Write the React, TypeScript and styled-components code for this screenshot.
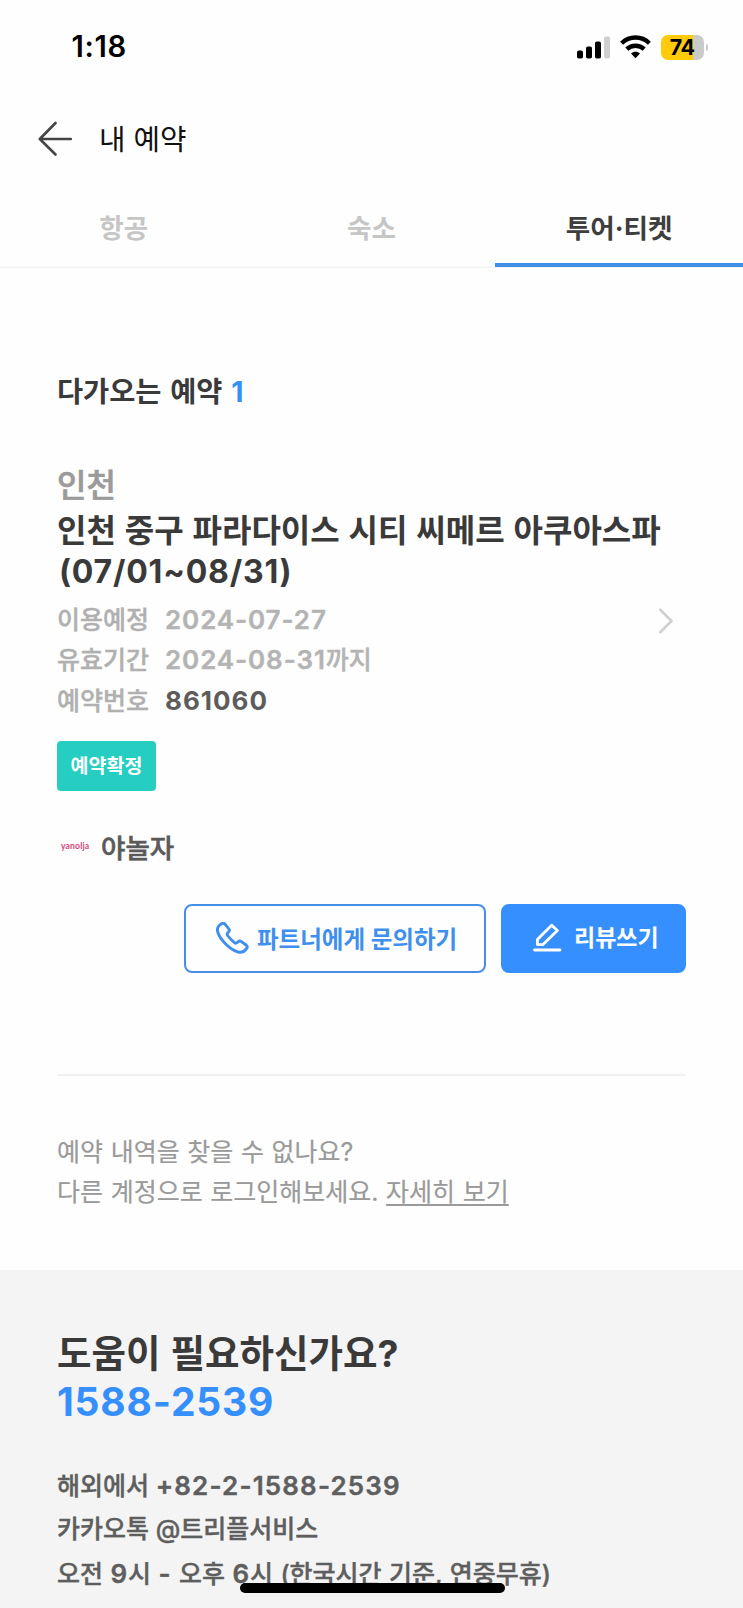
import React from "react";
import styled, { createGlobalStyle } from "styled-components";

const GlobalStyle = createGlobalStyle`
  * { box-sizing: border-box; }
  body {
    margin: 0;
    background: #fff;
    font-family: Inter, "Noto Sans CJK KR", sans-serif;
    color: #3a3a3a;
  }
  button { font: inherit; cursor: pointer; }
`;

const Screen = styled.div`
  position: relative;
  width: 743px;
  height: 1608px;
  overflow: hidden;
  display: flex;
  flex-direction: column;
  background: #fefefe;
  white-space: nowrap;
`;

const StatusBar = styled.div`
  height: 94px;
  flex: none;
  display: flex;
  align-items: center;
  justify-content: space-between;
  padding: 0 35px 0 71.5px;
`;

const Clock = styled.span`
  font-size: 29.2px;
  font-weight: 600;
  color: #000;
  line-height: 40px;
  letter-spacing: 0.7px;
`;

const StatusIcons = styled.div`
  display: flex;
  align-items: center;
`;

const Signal = styled.svg`
  margin-right: 10px;
`;

const Wifi = styled.svg`
  margin-right: 10px;
`;

const Battery = styled.div`
  width: 43.5px;
  height: 25px;
  border-radius: 7px;
  background: linear-gradient(90deg, #fdcb0a 0 32px, #cbcbcb 32px);
  color: #000;
  font-size: 21.5px;
  font-weight: 700;
  line-height: 25px;
  text-align: center;
  letter-spacing: -0.3px;
`;

const BatteryCap = styled.div`
  width: 2.5px;
  height: 7px;
  margin-left: 1.5px;
  border-radius: 0 3px 3px 0;
  background: #cbcbcb;
`;

const Header = styled.header`
  height: 90px;
  flex: none;
  display: flex;
  align-items: center;
  padding-left: 38px;
`;

const PageTitle = styled.h1`
  margin: 1px 0 0 25px;
  font-size: 28.8px;
  font-weight: 400;
  line-height: 40px;
  color: #111;
`;

const Tabs = styled.nav`
  flex: none;
  height: 84px;
  display: grid;
  grid-template-columns: repeat(3, 1fr);
  box-shadow: inset 0 -1.5px #f3f3f3;
`;

const Tab = styled.a<{ $active?: boolean }>`
  height: 83px;
  padding-top: 24px;
  text-align: center;
  font-size: 26.6px;
  font-weight: 700;
  line-height: 40px;
  color: ${(p) => (p.$active ? "#3d3d3d" : "#c6c6c6")};
  border-bottom: 4px solid ${(p) => (p.$active ? "#408ee8" : "transparent")};
`;

const Content = styled.main`
  flex: none;
  height: 1002px;
  padding: 103px 57px 0;
`;

const SectionTitle = styled.h2`
  margin: 0;
  font-size: 28.4px;
  font-weight: 700;
  line-height: 41px;
  word-spacing: 2px;
`;

const Count = styled.span`
  color: #368fff;
`;

const City = styled.div`
  margin-top: 53px;
  font-size: 32px;
  font-weight: 500;
  line-height: 42px;
  color: #9b9b9b;
  -webkit-text-stroke: 0.7px currentColor;
`;

const ProductName = styled.h3`
  margin: 3px 0 0;
  font-size: 32px;
  font-weight: 700;
  line-height: 41px;
  word-spacing: 1.3px;
`;

const Period = styled.span`
  padding-left: 2px;
  letter-spacing: 0.8px;
`;

const Details = styled.div`
  display: flex;
  justify-content: space-between;
  margin-top: 8px;
  padding-right: 12px;
`;

const DetailGrid = styled.dl`
  margin: 0;
  display: grid;
  grid-template-columns: 108px auto;
  grid-template-rows: 40px 41px 40px;
  font-size: 25px;
  font-weight: 500;
  line-height: 40px;
  color: #b0b0b0;
`;

const Label = styled.dt`
  -webkit-text-stroke: 0.4px currentColor;
`;

const Value = styled.dd<{ $strong?: boolean }>`
  margin: 0;
  color: ${(p) => (p.$strong ? "#5c5c5c" : "#b4b4b4")};
  font-weight: ${(p) => (p.$strong ? 700 : 500)};
  -webkit-text-stroke: ${(p) => (p.$strong ? 0 : 0.4)}px currentColor;
`;

const Digits = styled.span<{ $weight?: number; $spacing?: number }>`
  font-size: 26px;
  font-weight: ${(p) => p.$weight ?? 600};
  letter-spacing: ${(p) => p.$spacing ?? 0.9}px;
`;

const Chevron = styled.svg`
  margin-top: 7px;
`;

const StatusBadge = styled.div`
  width: 99px;
  height: 50px;
  margin-top: 20px;
  border-radius: 4px;
  background: #26cec2;
  color: #fff;
  font-size: 19.5px;
  font-weight: 700;
  line-height: 50px;
  text-align: center;
`;

const Partner = styled.div`
  height: 40px;
  margin-top: 37px;
  display: flex;
  align-items: center;
  font-size: 26.5px;
  font-weight: 500;
  line-height: 40px;
  color: #5a5a5a;
  -webkit-text-stroke: 0.6px currentColor;
`;

const PartnerLogo = styled.span`
  width: 44px;
  padding: 0 0 4px 4px;
  font-family: Lato, sans-serif;
  font-size: 8.6px;
  font-weight: 700;
  line-height: 12px;
  letter-spacing: 0.15px;
  color: #d8487c;
  -webkit-text-stroke: 0;
`;

const Actions = styled.div`
  display: flex;
  justify-content: flex-end;
  gap: 15px;
  margin-top: 36px;
`;

const ActionButton = styled.button<{ $primary?: boolean }>`
  height: 69px;
  width: ${(p) => (p.$primary ? 185 : 302)}px;
  padding: 0 0 0 30px;
  display: flex;
  align-items: center;
  border: 2px solid ${(p) => (p.$primary ? "#368fff" : "#468fe4")};
  border-radius: 8px;
  background: ${(p) => (p.$primary ? "#368fff" : "#fefefe")};
  color: ${(p) => (p.$primary ? "#fff" : "#3f8fee")};
  font-size: ${(p) => (p.$primary ? 23 : 23.5)}px;
  font-weight: 700;
  line-height: 40px;

  svg {
    flex: none;
    margin-right: ${(p) => (p.$primary ? 12 : 8)}px;
  }
  span {
    padding-top: ${(p) => (p.$primary ? 0 : 3)}px;
    padding-bottom: ${(p) => (p.$primary ? 1.5 : 0)}px;
  }
`;

const Divider = styled.hr`
  height: 2px;
  margin: 101px 0 0;
  border: 0;
  background: #f1f1f1;
`;

const MissingNote = styled.p`
  margin: 56px 0 0;
  font-size: 25px;
  line-height: 40.4px;
  word-spacing: 0.6px;
  color: #9a9a9a;
  -webkit-text-stroke: 0.2px currentColor;
`;

const MoreLink = styled.a`
  text-decoration: underline;
  text-decoration-thickness: 1.5px;
  text-underline-offset: 3px;
  text-decoration-skip-ink: none;
`;

const Support = styled.footer`
  flex: 1;
  padding: 60px 57px 0;
  background: #f4f4f4;
`;

const SupportTitle = styled.h2`
  margin: 0;
  font-size: 37.5px;
  font-weight: 700;
  line-height: 48px;
  word-spacing: 1px;
`;

const SupportPhone = styled.a`
  display: block;
  font-size: 39px;
  font-weight: 700;
  line-height: 48px;
  letter-spacing: 0.8px;
  color: #368fff;
`;

const SupportInfo = styled.div`
  margin-top: 37.5px;
  font-size: 25px;
  font-weight: 500;
  line-height: 43.6px;
  color: #5e5e5e;
  -webkit-text-stroke: 0.4px currentColor;
`;

const Hours = styled.div`
  word-spacing: 0.8px;
`;

const HomeIndicator = styled.div`
  position: absolute;
  left: 239.5px;
  bottom: 15px;
  width: 265px;
  height: 10px;
  border-radius: 5px;
  background: #000;
`;

export default function App() {
  return (
    <Screen>
      <GlobalStyle />
      <StatusBar>
        <Clock>1:18</Clock>
        <StatusIcons>
          <Signal width="33" height="23" viewBox="0 0 33 23">
            <rect x="0" y="14.5" width="6" height="8" rx="1.8" />
            <rect x="9" y="10.5" width="6" height="12" rx="1.8" />
            <rect x="18" y="5.5" width="6" height="17" rx="1.8" />
            <rect x="27" y="0.5" width="6" height="22" rx="1.8" fill="#cfcfcf" />
          </Signal>
          <Wifi width="31" height="24" viewBox="0 0 31 24">
            <g fill="none" stroke="#000" strokeWidth="4.3">
              <path d="M1.6 8.2C9.5 0.6 21.5 0.6 29.4 8.2" />
              <path d="M6.8 14.1C11.6 9.6 19.4 9.6 24.2 14.1" />
            </g>
            <path d="M11 18.4C13.6 16.1 17.4 16.1 20 18.4L15.5 23.2Z" />
          </Wifi>
          <Battery>74</Battery>
          <BatteryCap />
        </StatusIcons>
      </StatusBar>

      <Header>
        <svg width="36" height="36" viewBox="0 0 36 36" fill="none" stroke="#444" strokeWidth="2.6" strokeLinecap="round" strokeLinejoin="round">
          <path d="M17.5 2L1.8 18L17.5 33.5M1.8 18H32.8" />
        </svg>
        <PageTitle>내 예약</PageTitle>
      </Header>

      <Tabs>
        <Tab>항공</Tab>
        <Tab>숙소</Tab>
        <Tab $active>투어·티켓</Tab>
      </Tabs>

      <Content>
        <SectionTitle>
          다가오는 예약 <Count>1</Count>
        </SectionTitle>

        <City>인천</City>
        <ProductName>
          인천 중구 파라다이스 시티 씨메르 아쿠아스파
          <br />
          <Period>(07/01~08/31)</Period>
        </ProductName>

        <Details>
          <DetailGrid>
            <Label>이용예정</Label>
            <Value>
              <Digits>2024-07-27</Digits>
            </Value>
            <Label>유효기간</Label>
            <Value>
              <Digits>2024-08-31</Digits>까지
            </Value>
            <Label>예약번호</Label>
            <Value $strong>
              <Digits $weight={700} $spacing={1}>861060</Digits>
            </Value>
          </DetailGrid>
          <Chevron width="16" height="28" viewBox="0 0 16 28" fill="none" stroke="#d0d0d0" strokeWidth="2.6">
            <path d="M1.5 2L13.5 14L1.5 26" />
          </Chevron>
        </Details>

        <StatusBadge>예약확정</StatusBadge>

        <Partner>
          <PartnerLogo>yanolja</PartnerLogo>
          야놀자
        </Partner>

        <Actions>
          <ActionButton>
            <svg width="33" height="33" viewBox="0 0 33 33" fill="none" stroke="currentColor" strokeWidth="2.9" strokeLinejoin="round">
              <path d="M5.8 1.6C7 0.9 8.3 1.3 9.2 2.4L12.8 6.8C13.6 7.9 13.4 9.2 12.4 10.2L11.6 11.2C11 12 11 12.7 11.6 13.5C13.7 16.4 16 18.7 18.7 20.8C19.5 21.4 20.2 21.3 21 20.7L22 19.8C23 19 24.3 18.9 25.4 19.7L30 23C31.3 24 31.5 25.3 30.7 26.4C28.5 29.6 25.2 31 21.6 29.8C13.6 27.2 4.4 18 1.8 10.2C0.8 7 2.4 3.6 5.8 1.6Z" />
            </svg>
            <span>파트너에게 문의하기</span>
          </ActionButton>
          <ActionButton $primary>
            <svg width="29" height="31" viewBox="0 0 29 31" fill="none" stroke="currentColor" strokeWidth="2.8" strokeLinejoin="round" strokeLinecap="round">
              <path d="M4.4 16.4L18.7 2.2L24.4 7.6L10 21.6H4.4Z" />
              <path d="M1.5 27H27" />
            </svg>
            <span>리뷰쓰기</span>
          </ActionButton>
        </Actions>

        <Divider />

        <MissingNote>
          예약 내역을 찾을 수 없나요?
          <br />
          다른 계정으로 로그인해보세요. <MoreLink>자세히 보기</MoreLink>
        </MissingNote>
      </Content>

      <Support>
        <SupportTitle>도움이 필요하신가요?</SupportTitle>
        <SupportPhone>1588-2539</SupportPhone>
        <SupportInfo>
          <div>
            해외에서 <Digits $spacing={1.15}>+82-2-1588-2539</Digits>
          </div>
          <div>카카오톡 @트리플서비스</div>
          <Hours>
            오전 <Digits>9</Digits>시 <Digits>-</Digits> 오후 <Digits>6</Digits>시 (한국시간 기준, 연중무휴)
          </Hours>
        </SupportInfo>
      </Support>

      <HomeIndicator />
    </Screen>
  );
}
